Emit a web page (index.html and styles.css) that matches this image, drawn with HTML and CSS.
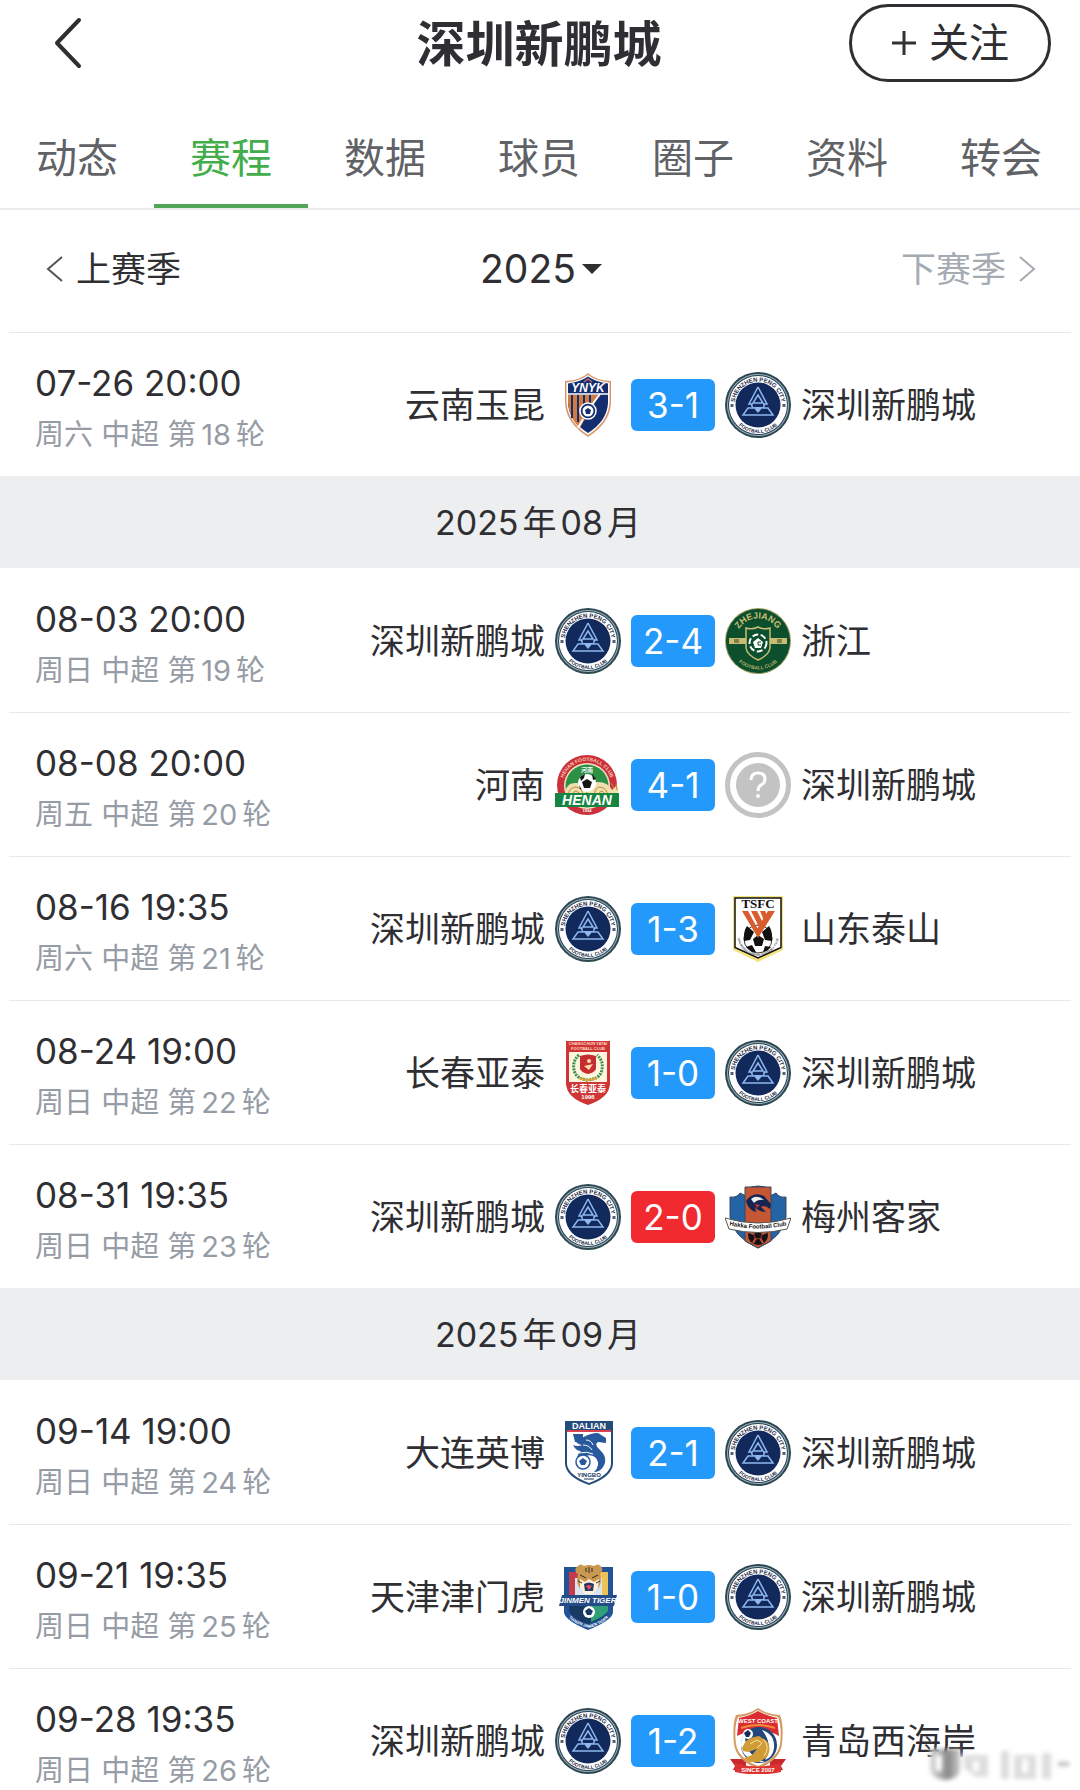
FILE: index.html
```html
<!DOCTYPE html>
<html lang="zh-CN">
  <head>
    <meta charset="utf-8">
    <meta name="viewport" content="width=device-width, initial-scale=1">
    <title>深圳新鹏城</title>
    <link rel="stylesheet" href="styles.css">
  </head>
  <body>

    <!-- club crests -->
    <svg class="sprite" aria-hidden="true">
      <symbol id="shenzhen" viewBox="0 0 66 66">
        <circle cx="33" cy="33" r="33" fill="#2c4652"/>
        <circle cx="33" cy="33" r="31" fill="#9fb3b5"/>
        <circle cx="33" cy="33" r="30" fill="#24415a"/>
        <circle cx="33" cy="33" r="29" fill="#fff"/>
        <circle cx="33" cy="33" r="22.5" fill="#12295c"/>
        <path id="szTop" d="M9.6 33a23.4 23.4 0 0 1 46.8 0" fill="none"/>
        <path id="szBottom" d="M5 33a28 28 0 0 0 56 0" fill="none"/>
        <text class="crest-text" font-size="6" fill="#1d2b45"><textPath href="#szTop" startOffset="50%" text-anchor="middle">SHENZHEN PENG CITY</textPath></text>
        <text class="crest-text" font-size="5" fill="#1d2b45"><textPath href="#szBottom" startOffset="50%" text-anchor="middle">FOOTBALL CLUB</textPath></text>
        <path d="M5.5 32h3v3h-3zM57.5 32h3v3h-3z" fill="#56606f"/>
        <g fill="none" stroke="#8fb8ee" stroke-width="1.5">
          <path d="M33 15l-9 17h4M33 15l9 17h-4M26 32l2 4h-5l-5 7h30l-5-7h-5l2-4"/>
          <path d="M33 23l-5 8h10z"/>
        </g>
        <path d="M28 35h10l-5 6z" fill="#8fb8ee"/>
      </symbol>

      <symbol id="yunnan" viewBox="0 0 66 66">
        <path d="M33 1Q40 8 56 9V31Q55 51 33 65Q11 51 10 31V9Q26 8 33 1z" fill="#d9986f"/>
        <path d="M33 3Q41 9 54.5 10.5V31Q53 50 33 63Q13 50 11.5 31V10.5Q25 9 33 3z" fill="#fff"/>
        <path d="M33 4.5Q41 10 53 11.5V31Q52 49 33 61Q14 49 13 31V11.5Q25 10 33 4.5z" fill="#142d6e"/>
        <path d="M13 23h30L25 56Q14 46 13 31z" fill="#cf7b42"/>
        <path d="M17 23v23M23 23v27M29 23v22M35 23v14" stroke="#142d6e" stroke-width="2"/>
        <path d="M12 22h42" stroke="#fff" stroke-width="1.5"/>
        <path d="M45 22L34 37M28 47l-5 9" stroke="#fff" stroke-width="2"/>
        <circle cx="33" cy="39" r="8" fill="#142d6e" stroke="#fff" stroke-width="1.5"/>
        <circle cx="33" cy="39" r="5.5" fill="#fff"/>
        <path d="M33 36l3 2-1 4h-4l-1-4z" fill="#142d6e"/>
        <text class="crest-text" x="33" y="20" text-anchor="middle" font-size="12" font-style="italic" fill="#fff">YNYK</text>
        <path d="M29 10l4-3 4 3" fill="none" stroke="#b96a73" stroke-width="1.5"/>
      </symbol>

      <symbol id="zhejiang" viewBox="0 0 66 66">
        <circle cx="33" cy="33" r="33" fill="#9b9a5c"/>
        <circle cx="33" cy="33" r="32" fill="#0b4f2c"/>
        <path id="zjTop" d="M10.5 33a22.5 22.5 0 0 1 45 0" fill="none"/>
        <path id="zjBottom" d="M4.5 33a28.5 28.5 0 0 0 57 0" fill="none"/>
        <text class="crest-text" font-size="9" fill="#c9bd76"><textPath href="#zjTop" startOffset="50%" text-anchor="middle">ZHEJIANG</textPath></text>
        <text class="crest-text" font-size="5" fill="#b3ad68"><textPath href="#zjBottom" startOffset="50%" text-anchor="middle">FOOTBALL CLUB</textPath></text>
        <path d="M4 30h17v6H4zM45 30h17v6H45z" fill="#c9bd76"/>
        <path d="M9 31h5v4H9zM52 31h5v4h-5z" fill="#7d7f45"/>
        <path d="M33 19q6 3 12 1v20q-1 7-12 12q-11-5-12-12V20q6 2 12-1z" fill="#0b4f2c" stroke="#c9bd76" stroke-width="1.5"/>
        <circle cx="33" cy="35" r="8.5" fill="none" stroke="#fff" stroke-width="2" stroke-dasharray="6 2.5"/>
        <path d="M33 30l5 4-2 6h-6l-2-6z" fill="#fff"/>
        <path d="M36 34h-3v3h3" stroke="#0b4f2c" fill="none"/>
      </symbol>

      <symbol id="henan" viewBox="0 0 66 66">
        <circle cx="32" cy="33" r="30" fill="#cb313b"/>
        <circle cx="32" cy="34" r="23" fill="#f2e3c4"/>
        <circle cx="32" cy="34" r="21.5" fill="#2c9045"/>
        <path id="hnTop" d="M7 34a25 25 0 0 1 50 0" fill="none"/>
        <text class="crest-text" font-size="5" fill="#f5cdb0"><textPath href="#hnTop" startOffset="50%" text-anchor="middle">HENAN FOOTBALL CLUB</textPath></text>
        <text class="crest-text" x="32" y="20" text-anchor="middle" font-size="6" fill="#fff">河南</text>
        <path d="M10 44q0-14 12-13 10 2 10 13zM32 44q0-14 11-14 10 0 14 8l5-5q4 6-2 11z" fill="#f0dfae"/>
        <path d="M13 44q1-9 8-9 7 1 7 9M17 44q1-5 4-5 4 1 4 5M39 44q1-9 6-9 7 1 8 9M43 44q1-5 4-5 3 1 3 5M56 31l3 5M61 32l1 6" fill="none" stroke="#c28b3c"/>
        <circle cx="32" cy="31" r="9" fill="#fff"/>
        <path d="M32 27l5 3-2 6h-6l-2-6zM25 25l5-3-1 4-3 3zM37 22l4 5-3 1zM24 33l3 5-2-1z" fill="#151515"/>
        <path d="M0 41h64v14H0z" fill="#178542"/>
        <text class="crest-text" x="32" y="53" text-anchor="middle" font-size="14" font-style="italic" fill="#fff">HENAN</text>
        <text class="crest-text" x="32" y="60" text-anchor="middle" font-size="4" fill="#fff">1994</text>
      </symbol>

      <symbol id="unknown" viewBox="0 0 66 66">
        <circle cx="33" cy="33" r="30.5" fill="#fff" stroke="#c3c3c3" stroke-width="5"/>
        <circle cx="33" cy="33" r="22" fill="#c3c3c3"/>
        <path d="M26 28q0-7 7-7t7 6q0 4-4 6-3 2-3 6" fill="none" stroke="#fff" stroke-width="3"/>
        <circle cx="33" cy="44" r="2" fill="#fff"/>
      </symbol>

      <symbol id="shandong" viewBox="0 0 66 66">
        <path d="M8 0h50v54L33 66 8 54z" fill="#f1e27e"/>
        <path d="M10 2h46v49.5L33 62 10 51.5z" fill="#fff" stroke="#111" stroke-width="1.5"/>
        <circle cx="33" cy="43" r="14" fill="#fff" stroke="#333"/>
        <path d="M22 30l7 6-4 8-6 1q-1-9 3-15zM44 30q4 6 3 15l-7-1-3-8zM28 43l5-4 6 4-2 7h-7zM21 51l6-2 4 7h-4zM38 56l2-6 6 1-4 4z" fill="#111"/>
        <path d="M17 15h6l12 22-2 5zM26 15h6l7 14-3 6zM35 15h5l3 6-3 6zM43 15h7L33 42l-3-6z" fill="#d95c2e"/>
        <path id="sdArc" d="M12 40q3 18 21 20q18-2 21-20" fill="none"/>
        <text class="crest-text" font-size="3" fill="#555"><textPath href="#sdArc" startOffset="50%" text-anchor="middle">SHANDONG TAISHAN FOOTBALL CLUB</textPath></text>
        <text x="33" y="12" text-anchor="middle" font-family="Liberation Serif, serif" font-weight="bold" font-size="13" fill="#111">TSFC</text>
      </symbol>

      <symbol id="changchun" viewBox="0 0 66 66">
        <path d="M11 1h44v43Q54 58 33 65Q12 58 11 44z" fill="#cf3535"/>
        <text class="crest-text" x="33" y="5" text-anchor="middle" font-size="4" fill="#ffd9c4">CHANGCHUN YATAI</text>
        <text class="crest-text" x="33" y="10" text-anchor="middle" font-size="4" fill="#ffd9c4">FOOTBALL CLUB</text>
        <path d="M14 12h38v30H14z" fill="#fff6dd"/>
        <path d="M24 15q-8 7-4 18 3 6 13 7 10-1 13-7 4-11-4-18" fill="none" stroke="#3c8e55" stroke-width="3" stroke-dasharray="2 1"/>
        <path d="M25 16q8-3 16 0v13q-2 4-8 5-6-1-8-5z" fill="#c62d30"/>
        <circle cx="34" cy="21" r="2" fill="#ffdba8"/>
        <path d="M29 26l9-2-4 6z" fill="#ffdba8"/>
        <path d="M24 38q9 4 18 0" stroke="#d7a83b" stroke-width="2" fill="none"/>
        <text class="crest-text" x="33" y="52" text-anchor="middle" font-size="9" fill="#fff">长春亚泰</text>
        <text class="crest-text" x="33" y="59" text-anchor="middle" font-size="6" fill="#fff">1996</text>
      </symbol>

      <symbol id="meizhou" viewBox="0 0 66 66">
        <path d="M5 13q7 1 10-4l6 3V5q12-6 24 0v7l6-3q3 5 10 4v20q-3 20-28 31Q8 53 5 33z" fill="#2364a7" stroke="#38475c"/>
        <path d="M20 3h26v54L33 64l-13-7z" fill="#c65734" stroke="#38475c"/>
        <path d="M21 17q7-10 18-5l7 8-1 5q-6-5-9-2l5 5q-7 0-11-5l1 5q-8-2-10-11z" fill="#152450"/>
        <path d="M26 15q6-5 13 1-6-1-10 3z" fill="#eee"/>
        <path d="M30 20l5 1-3 3z" fill="#c8372d"/>
        <circle cx="33" cy="51" r="10" fill="#141217"/>
        <path d="M33 41v4M24 48l5 2M42 48l-5 2M28 59l3-5M38 59l-3-5" stroke="#c65734" stroke-width="2"/>
        <circle cx="33" cy="51" r="4" fill="#141217" stroke="#a0392b"/>
        <path d="M0 34q33 10 66 0l-4 11q-29 7-58 0z" fill="#fff" stroke="#555"/>
        <path id="mzArc" d="M3 41q30 7 60 0" fill="none"/>
        <text class="crest-text" font-size="6" fill="#111"><textPath href="#mzArc" startOffset="50%" text-anchor="middle">Hakka Football Club</textPath></text>
      </symbol>

      <symbol id="dalian" viewBox="0 0 66 66">
        <path d="M10 1h48v43q-1 13-24 21Q11 57 10 44z" fill="#244c7b"/>
        <path d="M12 12h44v32q-1 11-22 19Q13 55 12 44z" fill="#fff"/>
        <path d="M12 10h44v2H12z" fill="#d94351"/>
        <text class="crest-text" x="34" y="9" text-anchor="middle" font-size="9" fill="#fff">DALIAN</text>
        <path d="M18 14h10v8h-8zM27 18q8-5 16-5l8 5v5l-8-1q-4 2 1 7 10 9 4 18-3 5-9 5 7-7 2-14-4-4-10-2-5 2-6 8-6-7 1-13-5 0-8-6 5 2 9 0-6-1-8-7z" fill="#27599c"/>
        <path d="M31 20q5 0 7 5M28 25q6 0 9 5M24 33q8-2 14 1" stroke="#fff" fill="none"/>
        <circle cx="28" cy="42" r="7" fill="#fff" stroke="#27599c" stroke-width="1.5"/>
        <path d="M28 38l4 3-2 4h-4l-2-4z" fill="#27599c"/>
        <text class="crest-text" x="34" y="57" text-anchor="middle" font-size="6" fill="#173962">YINGBO</text>
        <path d="M29 59h10" stroke="#173962"/>
      </symbol>

      <symbol id="tianjin" viewBox="0 0 66 66">
        <path d="M9 3h49v45q0 8-25 18Q9 56 9 48z" fill="#225398"/>
        <path d="M14 8h17v23H14z" fill="#c63b4c"/>
        <path d="M33 8h20v23H33z" fill="#edc357"/>
        <path d="M20 14h27v17H20z" fill="#d8e4ef"/>
        <path d="M14 36h39v11q-3 8-20 13-16-5-19-13z" fill="#173a65"/>
        <path d="M36 36h17v11q-4 6-17 11z" fill="#31a078"/>
        <path d="M21 4q4-6 8-2 5-2 10 0 5-4 8 2 1 4-2 6 3 11-4 16-7 5-14 0-7-5-4-16-4-2-2-6z" fill="#c99951"/>
        <path d="M25 15l5 3 4-3 5 3 5-3-1 9-5 6h-8l-5-6z" fill="#fff1d8"/>
        <path d="M25 11l6 3M43 11l-6 3M31 4v4M37 4v4M34 3v6M23 17l4 2M45 17l-4 2" stroke="#332a27"/>
        <path d="M29 20q5-3 10 0l-1 7h-8z" fill="#26386a"/>
        <path d="M31 22l3-1 3 1-3 4z" fill="#e84d57"/>
        <path d="M7 31h55l-3 11H4z" fill="#234c88"/>
        <text class="crest-text" x="33" y="39" text-anchor="middle" font-size="8" font-style="italic" fill="#fff">JINMEN TIGER</text>
        <circle cx="34" cy="48" r="6" fill="#fff"/>
        <path d="M34 44l4 3-2 4h-4l-2-4z" fill="#173a65"/>
        <path id="tjArc" d="M11 50q5 9 23 14 17-5 22-14" fill="none"/>
        <text class="crest-text" font-size="4" fill="#fff"><textPath href="#tjArc" startOffset="50%" text-anchor="middle">TIANJIN JINMEN TIGER</textPath></text>
      </symbol>

      <symbol id="qingdao" viewBox="0 0 66 66">
        <path d="M5 51h16v13L8 62l2-4zM61 51H45v13l13-2-2-4z" fill="#c7292d"/>
        <path d="M33 0q8 6 22 7 4 10 2 29Q55 52 33 61 11 52 9 36 7 17 11 7 25 6 33 0z" fill="#d49a60"/>
        <path d="M33 2q9 6 20 7 4 10 2 27Q53 50 33 58 13 50 11 36 9 19 13 9 24 8 33 2z" fill="#fff"/>
        <path d="M33 3q9 5 19 7l2 18q-20-12-42 0l2-18Q25 8 33 3z" fill="#da2c32"/>
        <text class="crest-text" x="33" y="15" text-anchor="middle" font-size="6" fill="#fff">WEST COAST</text>
        <path d="M16 20q17-6 34 0" stroke="#ed8d3c" stroke-width="2" fill="none"/>
        <circle cx="34" cy="37" r="18" fill="#24487b"/>
        <path d="M20 25q-8 12 0 22 8 8 20 7-21-6-20-29z" fill="#fff"/>
        <path d="M37 22q13 4 12 18-1 9-9 12 9-15-3-30z" fill="#fff"/>
        <path d="M17 40q4-11 17-12l8 5q5 8 0 16l-8 5H24l-5-4 8-3 5-6-9 3-5-1z" fill="#d19c35"/>
        <path d="M25 36l7-4 5 3-5 5M38 31q8 8 1 17" stroke="#ffe1a0" fill="none"/>
        <circle cx="23" cy="26" r="5" fill="#fff"/>
        <path d="M23 22l3 3-2 4h-3l-2-4z" fill="#172e5a"/>
        <path d="M10 55q23 7 46 0v9q-23 5-46 0z" fill="#dc3230"/>
        <text class="crest-text" x="33" y="64" text-anchor="middle" font-size="6" fill="#fff">SINCE 2007</text>
      </symbol>
    </svg>

    <header class="header">
      <button class="back" aria-label="返回">
        <svg width="28" height="52" viewBox="0 0 28 52"><path d="M25 3L3 26l22 23" fill="none" stroke="#2f2f31" stroke-width="4" stroke-linecap="round" stroke-linejoin="round"/></svg>
      </button>
      <h1>深圳新鹏城</h1>
      <button class="follow">
        <svg width="26" height="26" viewBox="0 0 26 26"><path d="M13 1v24M1 13h24" stroke="#333" stroke-width="3"/></svg>
        关注
      </button>
    </header>

    <nav class="tabs">
      <a href="#">动态</a>
      <a href="#" class="active">赛程</a>
      <a href="#">数据</a>
      <a href="#">球员</a>
      <a href="#">圈子</a>
      <a href="#">资料</a>
      <a href="#">转会</a>
    </nav>

    <div class="season">
      <button class="prev">
        <svg width="18" height="28" viewBox="0 0 18 28"><path d="M16 2L2 14l14 12" fill="none" stroke="#555" stroke-width="2"/></svg>
        上赛季
      </button>
      <button class="year">
        2025
        <svg width="20" height="10" viewBox="0 0 20 10"><path d="M0 0h20L10 10z" fill="#2f2f31"/></svg>
      </button>
      <button class="next">
        下赛季
        <svg width="18" height="28" viewBox="0 0 18 28"><path d="M2 2l14 12L2 26" fill="none" stroke="#a5abb2" stroke-width="2"/></svg>
      </button>
    </div>

    <main>
      <section class="month">
        <div class="match">
          <div class="when"><time>07-26 20:00</time><p>周六 中超 第<span>18</span>轮</p></div>
          <div class="home">云南玉昆</div>
          <svg class="crest"><use href="#yunnan"/></svg>
          <div class="score">3-1</div>
          <svg class="crest"><use href="#shenzhen"/></svg>
          <div class="away">深圳新鹏城</div>
        </div>
      </section>

      <section class="month">
        <h2>2025<span>年</span>08<span>月</span></h2>
        <div class="match">
          <div class="when"><time>08-03 20:00</time><p>周日 中超 第<span>19</span>轮</p></div>
          <div class="home">深圳新鹏城</div>
          <svg class="crest"><use href="#shenzhen"/></svg>
          <div class="score">2-4</div>
          <svg class="crest"><use href="#zhejiang"/></svg>
          <div class="away">浙江</div>
        </div>
        <div class="match">
          <div class="when"><time>08-08 20:00</time><p>周五 中超 第<span>20</span>轮</p></div>
          <div class="home">河南</div>
          <svg class="crest"><use href="#henan"/></svg>
          <div class="score">4-1</div>
          <svg class="crest"><use href="#unknown"/></svg>
          <div class="away">深圳新鹏城</div>
        </div>
        <div class="match">
          <div class="when"><time>08-16 19:35</time><p>周六 中超 第<span>21</span>轮</p></div>
          <div class="home">深圳新鹏城</div>
          <svg class="crest"><use href="#shenzhen"/></svg>
          <div class="score">1-3</div>
          <svg class="crest"><use href="#shandong"/></svg>
          <div class="away">山东泰山</div>
        </div>
        <div class="match">
          <div class="when"><time>08-24 19:00</time><p>周日 中超 第<span>22</span>轮</p></div>
          <div class="home">长春亚泰</div>
          <svg class="crest"><use href="#changchun"/></svg>
          <div class="score">1-0</div>
          <svg class="crest"><use href="#shenzhen"/></svg>
          <div class="away">深圳新鹏城</div>
        </div>
        <div class="match">
          <div class="when"><time>08-31 19:35</time><p>周日 中超 第<span>23</span>轮</p></div>
          <div class="home">深圳新鹏城</div>
          <svg class="crest"><use href="#shenzhen"/></svg>
          <div class="score win">2-0</div>
          <svg class="crest"><use href="#meizhou"/></svg>
          <div class="away">梅州客家</div>
        </div>
      </section>

      <section class="month">
        <h2>2025<span>年</span>09<span>月</span></h2>
        <div class="match">
          <div class="when"><time>09-14 19:00</time><p>周日 中超 第<span>24</span>轮</p></div>
          <div class="home">大连英博</div>
          <svg class="crest"><use href="#dalian"/></svg>
          <div class="score">2-1</div>
          <svg class="crest"><use href="#shenzhen"/></svg>
          <div class="away">深圳新鹏城</div>
        </div>
        <div class="match">
          <div class="when"><time>09-21 19:35</time><p>周日 中超 第<span>25</span>轮</p></div>
          <div class="home">天津津门虎</div>
          <svg class="crest"><use href="#tianjin"/></svg>
          <div class="score">1-0</div>
          <svg class="crest"><use href="#shenzhen"/></svg>
          <div class="away">深圳新鹏城</div>
        </div>
        <div class="match">
          <div class="when"><time>09-28 19:35</time><p>周日 中超 第<span>26</span>轮</p></div>
          <div class="home">深圳新鹏城</div>
          <svg class="crest"><use href="#shenzhen"/></svg>
          <div class="score">1-2</div>
          <svg class="crest"><use href="#qingdao"/></svg>
          <div class="away">青岛西海岸</div>
        </div>
      </section>
    </main>

    <!-- smudged watermark in the corner -->
    <svg class="smudge" width="150" height="44" viewBox="0 0 150 44" aria-hidden="true">
      <defs>
        <linearGradient id="fade" x1="0" y1="0" x2="1" y2="0">
          <stop offset="0" stop-color="#ddd"/>
          <stop offset=".6" stop-color="#888"/>
          <stop offset="1" stop-color="#ccc"/>
        </linearGradient>
      </defs>
      <path d="M4 12h124v24H4z" fill="#fff" opacity=".8"/>
      <path d="M4 6h30v22q-2 8-14 9Q5 36 4 26z" fill="url(#fade)"/>
      <path d="M13 12v16" stroke="#fff" stroke-width="6"/>
      <path d="M38 12h24v22H50l-12-9zM75 8h8v28h-8zM88 12h22v24H88zM116 10h9v26h-9z" fill="#ddd"/>
      <path d="M50 18v10M99 16v14" stroke="#fff" stroke-width="6"/>
      <path d="M132 21h11" stroke="#bbb" stroke-width="4"/>
    </svg>
  </body>
</html>
```

FILE: styles.css
```css
* {
    box-sizing: border-box;
}

body {
    margin: 0;
    height: 100vh;
    overflow: hidden;
    background: #fff;
    color: #2f2f33;
    font-family: Inter, "Noto Sans CJK SC", sans-serif;
    font-size: 35px;
}

h1, h2, p {
    margin: 0;
    font-weight: normal;
}

button {
    display: flex;
    align-items: center;
    padding: 0;
    border: 0;
    background: none;
    color: inherit;
    font: inherit;
}

.sprite {
    display: none;
}

.crest-text {
    font-family: "Liberation Sans", "Noto Sans CJK SC", sans-serif;
    font-weight: bold;
}

.header {
    display: grid;
    grid-template-columns: 1fr auto 1fr;
    align-items: center;
    height: 86px;
    padding: 0 29px 0 54px;
}

.header h1 {
    padding-top: 3px;
    font-size: 49px;
    font-weight: bold;
    line-height: 83px;
    margin-right: 27px;
}

.follow {
    justify-self: end;
    justify-content: center;
    gap: 12px;
    width: 202px;
    height: 78px;
    border: 3px solid #2f2f33;
    border-radius: 39px;
    font-size: 40px;
    line-height: 60px;
}

.tabs {
    display: flex;
    height: 124px;
    padding-right: 2px;
    border-bottom: 2px solid #eaebef;
}

.tabs a {
    flex: 1;
    padding-top: 18px;
    color: #606266;
    font-size: 41px;
    line-height: 108px;
    text-align: center;
    text-decoration: none;
}

.tabs .active {
    color: #43ad4b;
    border-bottom: 4px solid #52a556;
}

.season {
    display: grid;
    grid-template-columns: 1fr auto 1fr;
    align-items: center;
    height: 122px;
    padding: 0 44px 5px 46px;
}

.season button {
    gap: 12px;
    line-height: 48px;
}

.season .year {
    gap: 6px;
    font-size: 39px;
}

.season .next {
    justify-self: end;
    color: #a5abb2;
}

.month h2 {
    height: 92px;
    background: #edeef0;
    font-size: 34px;
    line-height: 94px;
    text-align: center;
}

.month h2 span {
    margin: 0 4px;
}

.match {
    position: relative;
    display: flex;
    align-items: center;
    gap: 10px;
    height: 144px;
    padding-top: 1px;
    padding-left: 35px;
}

.match::before {
    content: "";
    position: absolute;
    top: 0;
    left: 9px;
    right: 9px;
    border-top: 1px solid #e9e9ec;
}

h2 + .match::before {
    display: none;
}

.when {
    padding-top: 8px;
    line-height: 51px;
    white-space: nowrap;
}

.when time {
    display: block;
}

.when p {
    color: #969ca5;
    font-size: 29px;
}

.when span {
    margin: 0 5px;
}

.home,
.away {
    line-height: 46px;
}

.home {
    flex: 1;
    text-align: right;
}

.crest {
    flex: none;
    width: 66px;
    height: 66px;
}

.score {
    flex: none;
    width: 84px;
    border-radius: 6px;
    background: #2499fc;
    color: #fff;
    line-height: 52px;
    text-align: center;
}

.score.win {
    background: #f12a30;
}

.away {
    width: 279px;
}

.smudge {
    position: fixed;
    right: 4px;
    bottom: 3px;
    filter: blur(2px);
}
```
